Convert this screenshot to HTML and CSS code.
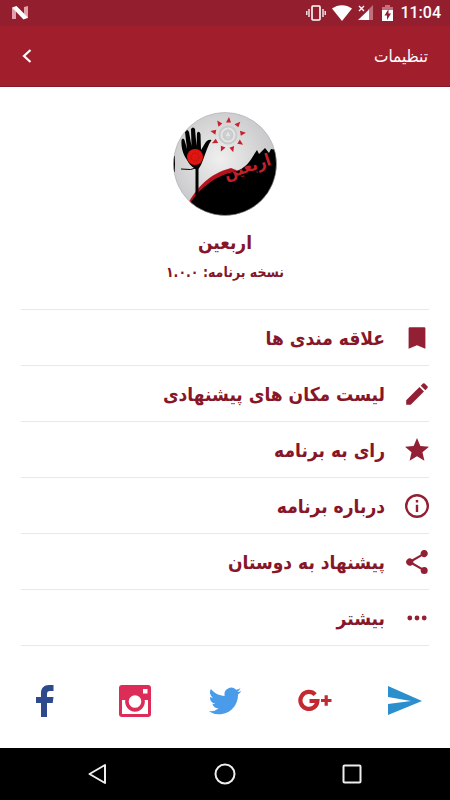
FILE: index.html
```html
<!DOCTYPE html>
<html lang="fa" dir="rtl">
<head>
    <meta charset="utf-8">
    <meta name="viewport" content="width=device-width, initial-scale=1">
    <title>تنظیمات</title>
    <link rel="stylesheet" href="styles.css">
</head>
<body>
    <div class="status" dir="ltr">
        <svg class="status-logo" width="16" height="14" viewBox="0 0 16 14">
            <path fill="#e0a0ac" d="M0 2l4-1v12H0zM12 1l4-1v12l-4 1z"/>
            <path fill="#fff" d="M0 1.500L4.500 0 16 11.500 11.500 13.500z"/>
        </svg>
        <svg width="20" height="18" viewBox="0 0 20 18" fill="none" stroke="#fff">
            <rect x="6" y="2" width="8" height="14" rx="1" stroke-width="1.600"/>
            <path stroke-width="1.300" d="M3 5v8M17 5v8M.8 7v4M19.200 7v4"/>
        </svg>
        <svg class="wifi" width="20" height="16" viewBox="0 0 20 16">
            <path fill="#fff" d="M0 3.500C6-1 14-1 20 3.500L10 16z"/>
        </svg>
        <svg class="signal" width="16" height="16" viewBox="0 0 16 16">
            <path fill="#c4707c" d="M15 0v15h-5V5z"/>
            <path fill="#fff" d="M0 15L11 4.500V15z"/>
            <path stroke="#fff" stroke-width="1.300" d="M1 1l5 5M6 1L1 6"/>
        </svg>
        <svg class="battery" width="11" height="16" viewBox="0 0 11 16">
            <path fill="#c4707c" d="M3 0h5v2h3v3H0V2h3z"/>
            <path fill="#fff" d="M0 5h11v11H0z"/>
            <path fill="#931f2e" d="M6.500 4L2.500 10.500H5V15l4-6.500H6.500z"/>
        </svg>
        <span class="clock">11:04</span>
    </div>

    <header class="header">
        <h1 class="header-title">تنظیمات</h1>
        <button class="back" aria-label="بازگشت">
            <svg width="10" height="14" viewBox="0 0 10 14" fill="none" stroke="#fff" stroke-width="2.200">
                <path d="M8.500 1L2 7l6.500 6"/>
            </svg>
        </button>
    </header>

    <main class="main">
        <section class="about">
            <svg class="logo" width="104" height="104" viewBox="0 0 104 104">
                <defs>
                    <radialGradient id="sky" cx="45%" cy="45%" r="60%">
                        <stop offset="0" stop-color="#efefef"/>
                        <stop offset="1" stop-color="#c3c3c5"/>
                    </radialGradient>
                    <clipPath id="round"><circle cx="52" cy="52" r="51.500"/></clipPath>
                </defs>
                <g clip-path="url(#round)">
                    <rect width="104" height="104" fill="url(#sky)"/>
                    <!-- hill -->
                    <path fill="#b5121f" d="M14 93C24 75 36 62 58 56L68 60 20 93z"/>
                    <path d="M17 91C29 74 43 64 60 60C73 57 77 49 82 41L84 38 86 42 92 36 96 41 98 37 104 38V104H14z"/>
                    <!-- hand -->
                    <path d="M14 48C10 42 8 36 8.500 28Q10 25 11.500 28L14 37 12 20Q14 16 16 20L18.500 34 18 17Q20 14 22 17L23.500 34 24 21Q26 18 27.500 22L28 38 31 33Q34 27 38.500 28C35 33 33 40 30 48Q28 54 25.500 57V81L22.500 84V57Q17 54 14 48z"/>
                    <path fill="none" stroke="#000" stroke-width="1" d="M8 57Q18 59 26 55"/>
                    <path d="M0 44h2v16H0z"/>
                    <circle cx="22" cy="45" r="8" fill="#e01511"/>
                    <circle cx="22" cy="45" r="4" fill="none" stroke="#b51512" stroke-dasharray="2 1"/>
                    <!-- sun -->
                    <g fill="none" stroke="#c9cacc" stroke-width="2">
                        <circle cx="55" cy="23" r="8.500" fill="#e4e4e5"/>
                        <circle cx="55" cy="23" r="4.500"/>
                        <path stroke-width="1.500" d="M55 18l-4 7h8z"/>
                    </g>
                    <g fill="#c9202b">
                        <path id="ray" d="M53 10.500h5L56 5z"/>
                        <use href="#ray" transform="rotate(40 55 23)"/>
                        <use href="#ray" transform="rotate(80 55 23)"/>
                        <use href="#ray" transform="rotate(120 55 23)"/>
                        <use href="#ray" transform="rotate(160 55 23)"/>
                        <use href="#ray" transform="rotate(200 55 23)"/>
                        <use href="#ray" transform="rotate(240 55 23)"/>
                        <use href="#ray" transform="rotate(280 55 23)"/>
                        <use href="#ray" transform="rotate(320 55 23)"/>
                    </g>
                    <text class="logo-text" x="76" y="60" text-anchor="middle" transform="rotate(-18 76 60)">اربعین</text>
                </g>
                <circle cx="52" cy="52" r="51.500" fill="none" stroke="#aaa" stroke-width=".6"/>
            </svg>
            <h2 class="app-name">اربعین</h2>
            <p class="version">نسخه برنامه: ۱.۰.۰</p>
        </section>

        <ul class="menu">
            <li><button class="menu-item">
                <svg class="icon" viewBox="2 2 20 20"><path d="M18 3H6a1 1 0 0 0-1 1v17l7-3 7 3V4a1 1 0 0 0-1-1z"/></svg>
                علاقه مندی ها
            </button></li>
            <li><button class="menu-item">
                <svg class="icon" viewBox="2 2 20 20"><path d="M3 17.250V21h3.750L17.810 9.940l-3.750-3.750L3 17.250zM20.710 7.040a1 1 0 0 0 0-1.410l-2.340-2.340a1 1 0 0 0-1.410 0l-1.830 1.830 3.750 3.750 1.830-1.830z"/></svg>
                لیست مکان های پیشنهادی
            </button></li>
            <li><button class="menu-item">
                <svg class="icon" viewBox="2 2 20 20"><path d="M12 17.270L18.180 21l-1.640-7.030L22 9.240l-7.190-.61L12 2 9.190 8.630 2 9.240l5.460 4.730L5.820 21z"/></svg>
                رای به برنامه
            </button></li>
            <li><button class="menu-item">
                <svg class="icon" viewBox="2 2 20 20"><path d="M11 17h2v-6h-2v6zm1-15a10 10 0 1 0 0 20 10 10 0 0 0 0-20zm0 18a8 8 0 1 1 0-16 8 8 0 0 1 0 16zM11 9h2V7h-2v2z"/></svg>
                درباره برنامه
            </button></li>
            <li><button class="menu-item">
                <svg class="icon" viewBox="2 2 20 20"><path d="M18 16.080c-.76 0-1.440.3-1.960.77L8.910 12.700a3.300 3.300 0 0 0 0-1.400l7.050-4.110A3 3 0 1 0 15 5c0 .24.040.47.090.7L8.040 9.810a3 3 0 1 0 0 4.380l7.120 4.160c-.05.21-.08.43-.08.650a2.920 2.920 0 1 0 2.920-2.920z"/></svg>
                پیشنهاد به دوستان
            </button></li>
            <li><button class="menu-item">
                <svg class="icon" viewBox="2 2 20 20"><circle cx="6" cy="12" r="2"/><circle cx="12" cy="12" r="2"/><circle cx="18" cy="12" r="2"/></svg>
                بیشتر
            </button></li>
        </ul>

        <nav class="social" dir="ltr">
            <a href="#" aria-label="Facebook">
                <svg width="34" height="34" viewBox="0 0 34 34"><path fill="#2f4a8c" d="M13 33V19H8v-6h5V9c0-5 3-8 8-8h4.500v6H22c-2 0-3 1-3 3v3h6.500l-.8 6H19v14z"/></svg>
            </a>
            <a href="#" aria-label="Instagram">
                <svg width="34" height="34" viewBox="0 0 34 34">
                    <rect x="1" y="1" width="32" height="32" rx="3" fill="#dc2c57"/>
                    <path fill="#fff" d="M4 16h3.500a9.700 9.700 0 1 0 19 0H30v14H4zM25 5h4.500v4.500H25z"/>
                    <circle cx="17" cy="17.500" r="9.600" fill="#dc2c57"/>
                    <circle cx="17" cy="17.500" r="6.300" fill="#fff"/>
                </svg>
            </a>
            <a href="#" aria-label="Twitter">
                <svg width="34" height="34" viewBox="-.5 -.5 25 25"><path fill="#4a9bea" d="M23.950 4.570a10 10 0 0 1-2.820.77 4.960 4.960 0 0 0 2.160-2.720c-.95.550-2 .950-3.130 1.180a4.920 4.920 0 0 0-8.380 4.480C7.690 8.100 4.070 6.130 1.640 3.160a4.920 4.920 0 0 0 1.520 6.570 4.900 4.900 0 0 1-2.230-.61v.06a4.920 4.920 0 0 0 3.950 4.830 5 5 0 0 1-2.210.08 4.940 4.940 0 0 0 4.600 3.420A9.870 9.870 0 0 1 0 19.540a14 14 0 0 0 7.550 2.210c9.050 0 14-7.500 14-13.980 0-.21 0-.42-.02-.63a9.940 9.940 0 0 0 2.460-2.550z"/></svg>
            </a>
            <a href="#" aria-label="Google Plus">
                <svg width="34" height="34" viewBox="0 0 34 34" fill="none" stroke="#c3292f">
                    <path stroke-width="4.200" d="M17.200 10.700A8.500 8.500 0 1 0 19.400 17H11.500"/>
                    <path stroke-width="3.200" d="M23 16.500h10.500M28.200 11.200v10.500"/>
                </svg>
            </a>
            <a href="#" aria-label="Telegram">
                <svg width="34" height="34" viewBox="0 0 34 34"><path fill="#2b8fce" d="M0 2l34 15L0 31V20l23-3L0 13z"/></svg>
            </a>
        </nav>
    </main>

    <footer class="system-nav" dir="ltr">
        <button aria-label="بازگشت"><svg width="22" height="22" viewBox="0 0 22 22"><path d="M18 2v18L2.500 11z"/></svg></button>
        <button aria-label="خانه"><svg width="22" height="22" viewBox="0 0 22 22"><circle cx="11" cy="11" r="9.500"/></svg></button>
        <button aria-label="برنامه‌ها"><svg width="22" height="22" viewBox="0 0 22 22"><rect x="2.500" y="2.500" width="17" height="17" rx="1"/></svg></button>
    </footer>
</body>
</html>
```

FILE: styles.css
```css
* {
    box-sizing: border-box;
}
body {
    margin: 0;
    min-height: 100vh;
    display: flex;
    flex-direction: column;
    font-family: "DejaVu Sans Condensed", "DejaVu Sans", sans-serif;
    background-color: #fff;
    color: #861628;
}
button {
    font-family: inherit;
    color: inherit;
    background: none;
    border: none;
    padding: 0;
    cursor: pointer;
}
svg {
    display: block;
}
.status {
    display: flex;
    align-items: center;
    height: 26px;
    padding: 0 9px 0 12px;
    background-color: #931f2e;
    color: #fff;
}
.status-logo {
    margin-right: auto;
}
.wifi {
    margin-left: 6px;
}
.signal {
    margin-left: 6px;
}
.battery {
    margin-left: 8px;
}
.clock {
    margin-left: 7px;
    font-family: Roboto, sans-serif;
    font-size: 16px;
    font-weight: 500;
    line-height: 28px;
}
.header {
    display: flex;
    align-items: center;
    justify-content: space-between;
    height: 61px;
    padding: 0 22px;
    background-color: #a11f2c;
    border-bottom: 1px solid #861628;
    color: #fff;
}
.header-title {
    margin: 0;
    font-size: 17px;
    font-weight: normal;
}
.main {
    flex: 1;
    display: flex;
    flex-direction: column;
}
.about {
    display: flex;
    flex-direction: column;
    align-items: center;
    padding: 25px 0 22px;
}
.logo-text {
    font-size: 17px;
    font-weight: bold;
    fill: #c4202c;
}
.app-name {
    margin: 10px 0 0;
    font-size: 19px;
    line-height: 32px;
}
.version {
    margin: 0;
    font-size: 14px;
    font-weight: bold;
    line-height: 29px;
}
.menu {
    list-style: none;
    margin: 0 21px;
    padding: 0;
    border-top: 1px solid #e8e8e8;
}
.menu li {
    border-bottom: 1px solid #e8e8e8;
}
.menu-item {
    display: flex;
    align-items: center;
    gap: 20px;
    width: 100%;
    height: 55px;
    font-size: 19px;
    font-weight: bold;
}
.icon {
    width: 24px;
    height: 24px;
    fill: #931f34;
}
.social {
    flex: 1;
    display: flex;
    align-items: center;
    padding-top: 8px;
}
.social a {
    flex: 1;
    display: flex;
    justify-content: center;
}
.system-nav {
    display: flex;
    justify-content: center;
    height: 52px;
    background-color: #000;
}
.system-nav button {
    display: flex;
    align-items: center;
    justify-content: center;
    width: 127px;
}
.system-nav svg {
    fill: none;
    stroke: #eee;
    stroke-width: 2;
    stroke-linejoin: round;
}
```
